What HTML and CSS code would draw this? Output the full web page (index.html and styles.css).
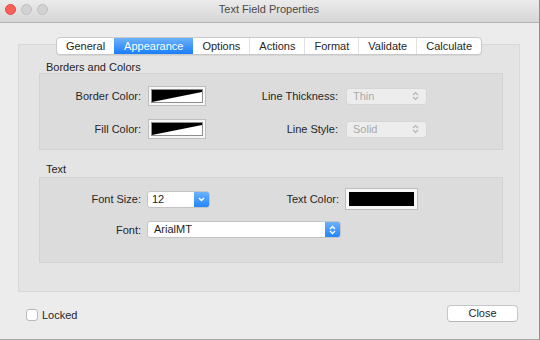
FILE: index.html
```html
<!DOCTYPE html>
<html>
<head>
<meta charset="utf-8">
<link rel="stylesheet" href="styles.css">
</head>
<body>
<div class="window">
  <div class="titlebar">
    <div class="lights">
      <span class="light red"></span>
      <span class="light gray"></span>
      <span class="light gray"></span>
    </div>
    <div class="title">Text Field Properties</div>
  </div>
  <div class="content">
    <div class="tabs-wrap">
      <div class="tabs">
        <div class="tab">General</div>
        <div class="tab active">Appearance</div>
        <div class="tab nosep">Options</div>
        <div class="tab">Actions</div>
        <div class="tab">Format</div>
        <div class="tab">Validate</div>
        <div class="tab">Calculate</div>
      </div>
    </div>
    <div class="panel">
      <div class="section-label">Borders and Colors</div>
      <div class="group group-borders">
        <div class="row">
          <div class="lbl">Border Color:</div>
          <div class="swatch">
            <div class="swatch-inner">
              <svg width="50" height="12" viewBox="0 0 50 12" preserveAspectRatio="none"><polygon points="0,0 50,0 50,2 0,12" fill="#000"/></svg>
            </div>
          </div>
          <div class="lbl2">Line Thickness:</div>
          <div class="select disabled"><span>Thin</span>
            <svg class="updown" width="7" height="10" viewBox="0 0 7 10"><polyline points="1,4 3.5,1.5 6,4" fill="none" stroke="#b4b4b4" stroke-width="1.2"/><polyline points="1,6 3.5,8.5 6,6" fill="none" stroke="#b4b4b4" stroke-width="1.2"/></svg>
          </div>
        </div>
        <div class="row">
          <div class="lbl">Fill Color:</div>
          <div class="swatch">
            <div class="swatch-inner">
              <svg width="50" height="12" viewBox="0 0 50 12" preserveAspectRatio="none"><polygon points="0,0 50,0 50,2 0,12" fill="#000"/></svg>
            </div>
          </div>
          <div class="lbl2">Line Style:</div>
          <div class="select disabled"><span>Solid</span>
            <svg class="updown" width="7" height="10" viewBox="0 0 7 10"><polyline points="1,4 3.5,1.5 6,4" fill="none" stroke="#b4b4b4" stroke-width="1.2"/><polyline points="1,6 3.5,8.5 6,6" fill="none" stroke="#b4b4b4" stroke-width="1.2"/></svg>
          </div>
        </div>
      </div>
      <div class="section-label second">Text</div>
      <div class="group group-text">
        <div class="row row-a">
          <div class="lbl lbl-t">Font Size:</div>
          <div class="combo">
            <span class="combo-text">12</span>
            <span class="blue-btn">
              <svg width="7" height="5" viewBox="0 0 7 5"><polyline points="1,1 3.5,3.5 6,1" fill="none" stroke="#fff" stroke-width="1.4"/></svg>
            </span>
          </div>
          <div class="lbl2 lbl2-t">Text Color:</div>
          <div class="swatch swatch-text"><div class="swatch-black"></div></div>
        </div>
        <div class="row row-b">
          <div class="lbl lbl-t">Font:</div>
          <div class="combo popup">
            <span class="combo-text">ArialMT</span>
            <span class="blue-btn">
              <svg width="7" height="10" viewBox="0 0 7 10"><polyline points="1,4 3.5,1.5 6,4" fill="none" stroke="#fff" stroke-width="1.3"/><polyline points="1,6 3.5,8.5 6,6" fill="none" stroke="#fff" stroke-width="1.3"/></svg>
            </span>
          </div>
        </div>
      </div>
    </div>
    <div class="bottom">
      <label class="check"><span class="box"></span><span>Locked</span></label>
      <div class="button">Close</div>
    </div>
  </div>
</div>
</body>
</html>
```
FILE: styles.css
```css
html, body {
  margin: 0;
  padding: 0;
  background: #ececec;
}
body {
  font-family: "Liberation Sans", Arial, sans-serif;
  font-size: 11px;
  color: #262626;
}
.window {
  width: 539px;
  height: 339px;
  background: #ececec;
  border-right: 1px solid #8e8e8e;
  border-bottom: 1px solid #a6a6a6;
  overflow: hidden;
}
.titlebar {
  height: 22px;
  border-bottom: 1px solid #b4b4b4;
  background: linear-gradient(#ebebeb, #d6d6d6);
  display: flex;
  align-items: center;
  position: relative;
}
.lights {
  display: flex;
  gap: 5px;
  padding-left: 5px;
  margin-top: -4px;
}
.light {
  width: 11px;
  height: 11px;
  border-radius: 50%;
  box-sizing: border-box;
}
.light.red {
  background: #fc5f57;
  border: 1px solid #df4b44;
}
.light.gray {
  background: #d2d2d2;
  border: 1px solid #c0c0c0;
}
.title {
  flex: 1;
  text-align: center;
  font-size: 11px;
  color: #4a4a4a;
  margin-left: -49px;
  margin-top: -4px;
}
.content {
  padding: 0 19px 0 18px;
}
.tabs-wrap {
  display: flex;
  justify-content: center;
  margin-top: 14px;
  margin-bottom: -11px;
  position: relative;
  z-index: 1;
}
.tabs {
  display: flex;
  height: 16px;
  background: #fff;
  border: 1px solid #c9c9c9;
  border-radius: 4px;
  box-shadow: 0 1px 0 rgba(0,0,0,0.06);
  overflow: hidden;
}
.tab {
  padding: 0 9px;
  line-height: 16px;
  color: #262626;
  border-left: 1px solid #e2e2e2;
}
.tab:first-child, .tab.nosep {
  border-left: none;
}
.tab.active {
  background: linear-gradient(#6cb2fb, #1b7ef9);
  color: #fff;
  border-left: none;
  padding: 0 10px;
}
.panel {
  height: 248px;
  background: #e4e4e4;
  border: 1px solid #d8d8d8;
  padding-top: 16px;
  box-sizing: border-box;
}
.section-label {
  height: 12px;
  line-height: 12px;
  padding-left: 27px;
  color: #262626;
}
.section-label.second {
  margin-top: 13px;
  margin-bottom: 2px;
}
.group {
  margin: 0 16px 0 20px;
  background: #dcdcdc;
  border: 1px solid #d3d3d3;
  display: flex;
  flex-direction: column;
}
.group-borders {
  padding: 12px 0 10px;
  gap: 13px;
}
.group-text {
  padding: 10px 0 24px;
  gap: 11px;
}
.row {
  display: flex;
  align-items: center;
  height: 20px;
}
.row-a { height: 22px; }
.row-b { height: 17px; }
.lbl {
  width: 101px;
  text-align: right;
  margin-right: 7px;
}
.lbl-t { margin-right: 6px; }
.lbl2 {
  width: 132px;
  text-align: right;
  margin-right: 8px;
}
.lbl2-t {
  width: 129px;
  margin-right: 6px;
}
.swatch {
  width: 58px;
  height: 20px;
  box-sizing: border-box;
  background: #f7f7f7;
  border: 1px solid #bdbdbd;
  display: flex;
  align-items: center;
  justify-content: center;
}
.swatch-inner {
  width: 52px;
  height: 14px;
  box-sizing: border-box;
  border: 1px solid #8d8d8d;
  background: #fff;
  display: flex;
}
.swatch-inner svg { display: block; }
.swatch-text {
  width: 73px;
  height: 22px;
}
.swatch-black {
  width: 65px;
  height: 14px;
  background: #000;
}
.select {
  width: 81px;
  height: 17px;
  box-sizing: border-box;
  border: 1px solid #d6d6d6;
  border-radius: 3px;
  background: #ededed;
  display: flex;
  align-items: center;
  justify-content: space-between;
  padding: 0 7px 0 6px;
  color: #a9a9a9;
}
.combo {
  width: 63px;
  height: 17px;
  box-sizing: border-box;
  border: 1px solid #c4c4c4;
  border-radius: 3px;
  background: #fff;
  display: flex;
  align-items: stretch;
  overflow: hidden;
}
.combo.popup { width: 194px; }
.combo-text {
  flex: 1;
  padding-left: 4px;
  line-height: 15px;
  color: #1e1e1e;
}
.popup .combo-text { padding-left: 6px; }
.blue-btn {
  width: 15px;
  background: linear-gradient(#6bb1fa, #2486f9);
  display: flex;
  align-items: center;
  justify-content: center;
}
.bottom {
  display: flex;
  justify-content: space-between;
  align-items: center;
  margin-top: 13px;
  height: 17px;
}
.check {
  display: flex;
  align-items: center;
  gap: 4px;
  margin-left: 8px;
  margin-top: 3px;
  color: #262626;
}
.box {
  width: 12px;
  height: 12px;
  box-sizing: border-box;
  background: #fff;
  border: 1px solid #b8b8b8;
  border-radius: 3px;
}
.button {
  width: 71px;
  height: 17px;
  box-sizing: border-box;
  background: #fff;
  border: 1px solid #c6c6c6;
  border-bottom-color: #b5b5b5;
  border-radius: 4px;
  text-align: center;
  line-height: 15px;
  margin-right: 2px;
  color: #262626;
}
```
